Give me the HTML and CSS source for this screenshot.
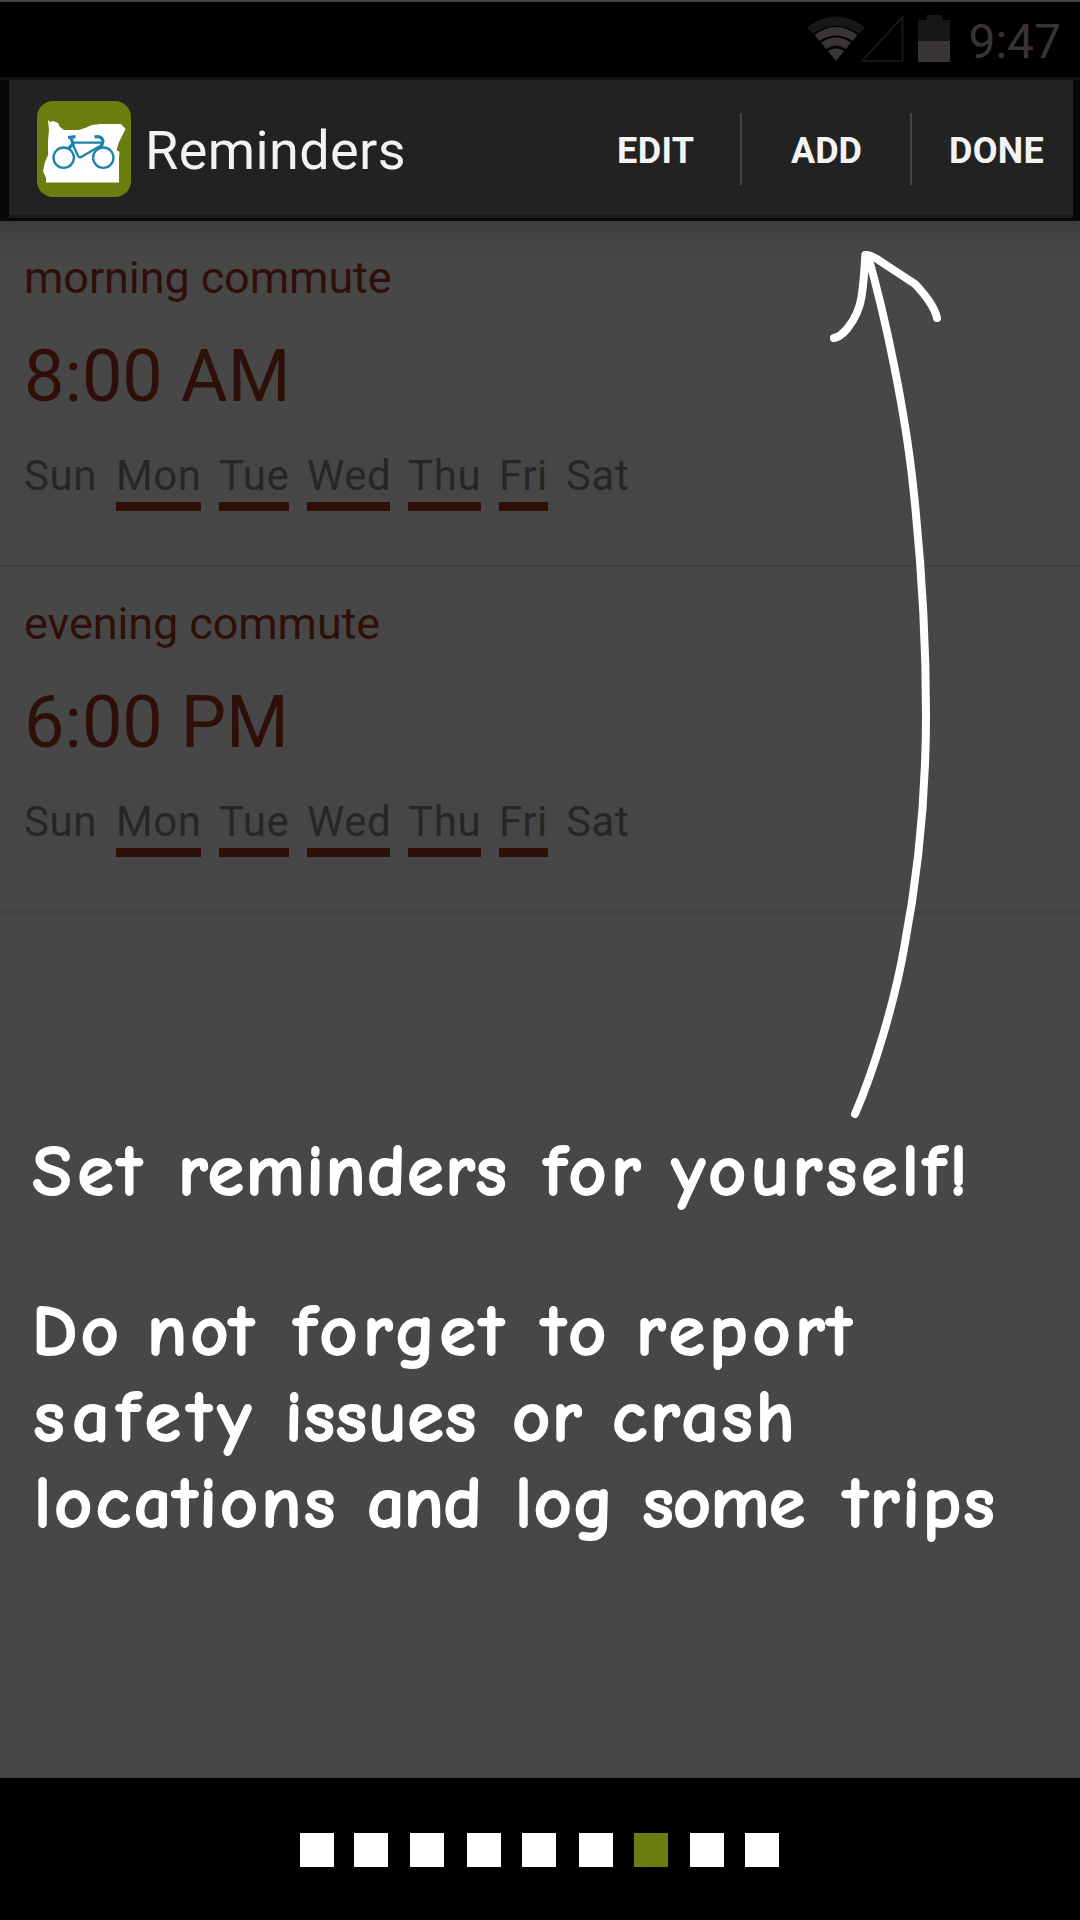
FILE: index.html
```html
<!DOCTYPE html>
<html lang="en">
<head>
<meta charset="utf-8">
<title>Reminders</title>
<link rel="stylesheet" href="styles.css">
</head>
<body>
<div class="screen">
  <header class="status">
    <svg class="status-icons" width="145" height="50" viewBox="0 0 145 50">
      <path class="dim" d="M1 13Q30-8 59 13L53 20Q30 4 7 20Z"/>
      <path class="lit" d="M8.500 21Q30 5 51.500 21L46.500 27Q30 16 13.500 27Z"/>
      <path class="lit" d="M15 28.500Q30 18.500 45 28.500L40 35Q30 28 20 35Z"/>
      <path class="lit" d="M22 37Q30 31.500 38 37L30 47Z"/>
      <path class="outline" d="M56 47H96.500V3Z"/>
      <path class="dim" d="M120.500 1H136V6H144V28H112V6H120.500Z"/>
      <path class="lit" d="M112 27H144V48H112Z"/>
    </svg>
    <span class="clock">9:47</span>
  </header>

  <nav class="bar">
    <svg class="logo" width="94" height="96" viewBox="0 0 94 96">
      <rect width="94" height="96" rx="16" fill="#6a7e0f"/>
      <path fill="#fff" d="M11 19L13 21L16 20L21 22L23 26L27 29L36 29L42 29L48 27L55 24L64 23L84 23L88.500 28L85 35L82 41L79.500 49L82.500 51L82 56V81.500H9V77L6 70L8 61L11 54L11 40L12 29Z"/>
      <g fill="none" stroke="#1b84aa" stroke-width="2.300">
        <circle cx="26.700" cy="56.700" r="10.200"/>
        <circle cx="66.300" cy="56.700" r="10.200"/>
        <path d="M35 41.700H64M35.500 42.500L41 55Q42.500 57.500 45 55.500L64 44.500"/>
        <path stroke-width="3.200" d="M31 36.500L38.500 35.700M34 36.500L36 43L32 47M57.500 36Q65 34.500 66 40L64 47"/>
      </g>
    </svg>
    <h1 class="title">Reminders</h1>
    <div class="actions">
      <span class="action edit">EDIT</span>
      <span class="action add">ADD</span>
      <span class="action done">DONE</span>
    </div>
  </nav>

  <main class="content">
    <section class="reminder">
      <h2 class="name">morning commute</h2>
      <p class="time">8:00 AM</p>
      <div class="days">
        <span class="day">Sun</span><span class="day on">Mon</span><span class="day on">Tue</span><span class="day on">Wed</span><span class="day on">Thu</span><span class="day on">Fri</span><span class="day">Sat</span>
      </div>
    </section>
    <section class="reminder">
      <h2 class="name">evening commute</h2>
      <p class="time">6:00 PM</p>
      <div class="days">
        <span class="day">Sun</span><span class="day on">Mon</span><span class="day on">Tue</span><span class="day on">Wed</span><span class="day on">Thu</span><span class="day on">Fri</span><span class="day">Sat</span>
      </div>
    </section>

    <div class="notes">
      <p class="line l1"><span class="k5">Set</span> <span class="k2">reminders</span> <span class="k4">for</span> <span class="k4">yourself!</span></p>
      <p class="line l2"><span class="k3">Do</span> <span class="k3">not</span> <span class="k5">forget</span> <span class="k5">to</span> <span class="k4">report</span></p>
      <p class="line l3"><span class="k6">safety</span> <span class="k2">issues</span> <span class="k2">or</span> <span class="k3">crash</span></p>
      <p class="line l4"><span class="k3">locations</span> <span class="k1">and</span> <span class="k2">log</span> <span class="k1">some</span> <span class="k3">trips</span></p>
    </div>
  </main>

  <footer class="pager">
    <i class="dot"></i><i class="dot"></i><i class="dot"></i><i class="dot"></i><i class="dot"></i><i class="dot"></i><i class="dot current"></i><i class="dot"></i><i class="dot"></i>
  </footer>

  <svg class="arrow" width="120" height="880" viewBox="825 245 120 880">
    <path d="M868 256C885 315 905 410 913 485C919 540 926 620 926 715C926 800 917 880 904.300 947C895 1000 875 1068 855 1114"/>
    <path d="M834 338Q840 337 847 329Q859 314 861.500 297Q864 281 865.300 255Q870 254 880 261L915 284Q934 304 937 318"/>
  </svg>
</div>
</body>
</html>
```
FILE: styles.css
```css
* { box-sizing: border-box; }

body {
  margin: 0;
  background: #474747;
  font-family: Roboto, "Liberation Sans", sans-serif;
}

h1, h2, p { margin: 0; font-weight: 400; }

.screen {
  position: relative;
  display: flex;
  flex-direction: column;
  width: 1080px;
  height: 1920px;
  overflow: hidden;
  background: #474747;
}

/* status bar */
.status {
  display: flex;
  justify-content: flex-end;
  gap: 17px;
  height: 80px;
  padding: 12px 19px 0 0;
  background: #000;
  border-top: 2px solid #474747;
  border-bottom: 3px solid #111;
}
.status-icons { flex: none; }
.dim { fill: #181717; }
.lit { fill: #393434; }
.outline { fill: none; stroke: #181717; stroke-width: 2; }
.clock { font-size: 48px; line-height: 56px; color: #393434; }

/* action bar */
.bar {
  display: flex;
  align-items: flex-start;
  height: 141px;
  padding: 21px 0 0 28px;
  background: #222;
  border: solid #080808;
  border-width: 0 7px 3px 9px;
  box-shadow: inset 0 -3px #191919;
}
.logo { flex: none; }
.title {
  margin-left: 14px;
  padding-top: 18px;
  font-size: 54px;
  line-height: 64px;
  letter-spacing: .4px;
  color: #f3f3f3;
}
.actions {
  display: grid;
  grid-template-columns: 170px 170px 161px;
  margin: 12px 0 0 auto;
  color: #f3f3f3;
  font-size: 36px;
  font-weight: 700;
  line-height: 77px;
}
.action { height: 72px; }
.edit, .add { border-right: 2px solid #444; }
.edit { padding-left: 45px; letter-spacing: .4px; }
.add { padding-left: 49px; }
.done { padding-left: 37px; letter-spacing: .3px; }

/* reminder list */
.content {
  height: 1557px;
  background: linear-gradient(#3d3d3d, #434343 16px, #474747 38px);
}
.reminder {
  height: 346px;
  padding: 29px 24px 0;
  border-bottom: 2px solid #414141;
}
.name { font-size: 45px; line-height: 56px; letter-spacing: -.1px; color: #2f1008; }
.time { font-size: 72px; line-height: 84px; margin-top: 29px; color: #2f1008; }
.days {
  display: grid;
  grid-template-columns: 74px 85px 70px 83px 73px 49px 62px;
  column-gap: 18px;
  margin-top: 27px;
  font-size: 42px;
  line-height: 60px;
  letter-spacing: .6px;
  color: #262626;
}
.day { height: 76px; background: #464646; white-space: nowrap; }
.on::after {
  content: "";
  display: block;
  height: 9px;
  margin-top: -4px;
  background: #2f1008;
}

/* handwritten captions */
.notes {
  padding: 216px 0 0 33px;
  font-family: "Comic Sans MS", "Comic Neue", "DejaVu Sans", sans-serif;
  font-size: 69px;
  font-weight: 700;
  line-height: 86px;
  color: #fff;
  -webkit-text-stroke: 4px #fff;
}
.line { display: grid; white-space: nowrap; }
.l1 { grid-template-columns: 146px 366px 128px 320px; margin-bottom: 74px; }
.l2 { grid-template-columns: 115px 147px 249px 93px 230px; }
.l3 { grid-template-columns: 251px 227px 100px 220px; padding-left: 2px; }
.l4 { grid-template-columns: 333px 148px 128px 202px 180px; padding-left: 2px; }

/* uneven pen spacing, from tight to loose */
.k1 { letter-spacing: 1.200px; }
.k2 { letter-spacing: 3.500px; }
.k3 { letter-spacing: 5px; }
.k4 { letter-spacing: 6.300px; }
.k5 { letter-spacing: 7.200px; }
.k6 { letter-spacing: 9.500px; }

.arrow {
  position: absolute;
  left: 825px;
  top: 245px;
  fill: none;
  stroke: #fff;
  stroke-width: 8px;
  stroke-linecap: round;
  stroke-linejoin: round;
}

/* page indicator */
.pager {
  display: grid;
  grid-template-columns: 54px 56px 57px 55px 57px 55px 56px 55px 34px;
  height: 142px;
  padding: 55px 0 0 300px;
  background: #000;
}
.dot { width: 34px; height: 34px; background: #fff; }
.current { background: #6a7e0f; }
```
